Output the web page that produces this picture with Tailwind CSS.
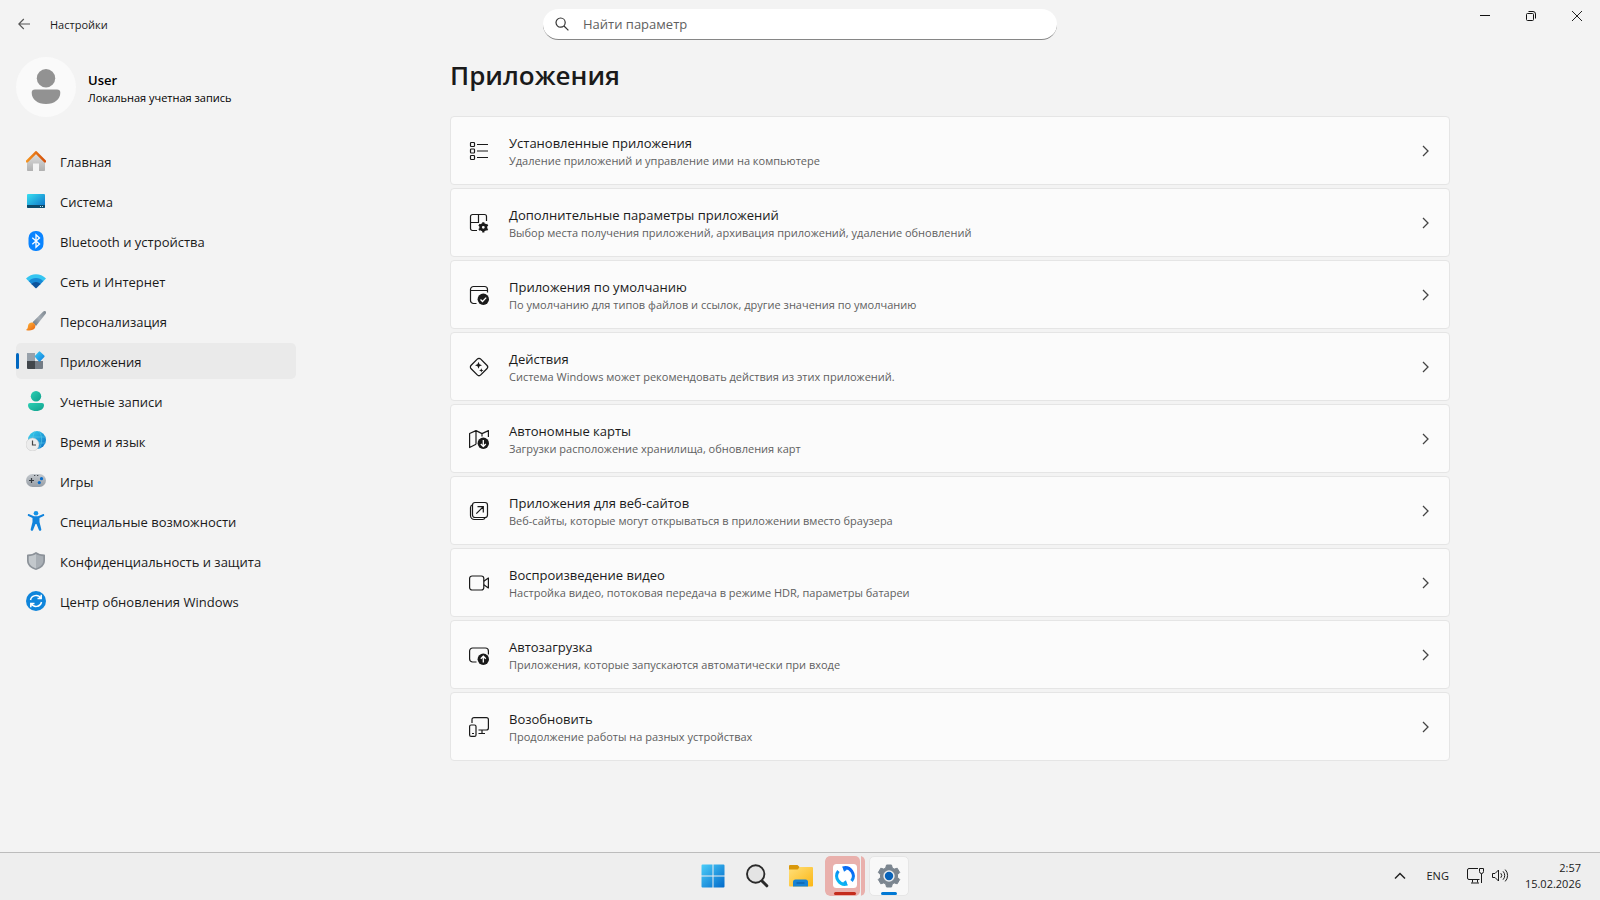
<!DOCTYPE html>
<html lang="ru">
<head>
  <meta charset="UTF-8">
  <meta name="viewport" content="width=device-width, initial-scale=1.0">
  <title>Настройки</title>
  <script src="https://cdn.jsdelivr.net/npm/@tailwindcss/browser@4"></script>
</head>
<body class="flex flex-col min-h-screen bg-[#f3f3f3] text-[#1a1a1a] font-['Open_Sans','Noto_Sans',sans-serif] text-[13px] leading-5">
  <!-- Title bar -->
  <header class="grid grid-cols-[1fr_minmax(0,514px)_1fr] h-12">
    <div class="flex items-center">
      <button class="w-12 h-8 pl-[18px]" aria-label="Назад">
        <svg class="w-3 h-3" viewBox="0 0 12 12" fill="none" stroke="#555" stroke-width="1.1"><path d="M12 6H.8M5.8 1 .8 6l5 5"/></svg>
      </button>
      <span class="pl-0.5 pt-0.5 text-[11px]">Настройки</span>
    </div>
    <div class="flex items-center gap-[14px] h-[31px] mt-[9px] pl-3 bg-white rounded-full border-b border-[#868686]">
      <svg class="w-[14px] h-[14px]" viewBox="0 0 14 14" fill="none" stroke="#333" stroke-width="1.2"><circle cx="5.6" cy="5.6" r="4.6"/><path d="m9 9 4.4 4.4"/></svg>
      <input type="text" aria-label="Найти параметр" placeholder="Найти параметр" class="flex-1 outline-none placeholder:text-[#606060]">
    </div>
    <div class="flex justify-end">
      <button class="flex items-center justify-center w-[46px] h-8" aria-label="Свернуть">
        <svg class="w-[10px] h-[10px]" viewBox="0 0 10 10" stroke="#111"><path d="M0 4.5h10"/></svg>
      </button>
      <button class="flex items-center justify-center w-[46px] h-8" aria-label="Свернуть в окно">
        <svg class="w-[10px] h-[10px]" viewBox="0 0 10 10" fill="none" stroke="#111"><rect x=".5" y="2.5" width="7" height="7" rx="1"/><path d="M2.5.5H7A2.5 2.5 0 0 1 9.5 3v4.5"/></svg>
      </button>
      <button class="flex items-center justify-center w-[46px] h-8" aria-label="Закрыть">
        <svg class="w-[10px] h-[10px]" viewBox="0 0 10 10" stroke="#222"><path d="m0 0 10 10M10 0 0 10"/></svg>
      </button>
    </div>
  </header>

  <div class="flex flex-1">
    <!-- Sidebar -->
    <aside class="w-[300px] shrink-0 pl-4 pr-1 pt-[9px]">
      <div class="flex items-center gap-3">
        <svg class="w-[60px] h-[60px]" viewBox="0 0 60 60"><circle cx="30" cy="30" r="30" fill="#fafafa"/><circle cx="30" cy="21.3" r="9.2" fill="#929292"/><path d="M19 32.5h22a3.3 3.3 0 0 1 3.3 3.3C44.3 42.5 38.5 47 30 47s-14.3-4.5-14.3-11.2A3.3 3.3 0 0 1 19 32.5z" fill="#929292"/></svg>
        <div class="pt-1 text-black">
          <div class="leading-[18px] font-semibold">User</div>
          <div class="text-[11px] leading-[18px]">Локальная учетная запись</div>
        </div>
      </div>
      <nav class="flex flex-col gap-1 mt-[26px]">
        <a href="#" class="flex items-center gap-[14px] h-9 pl-[10px] pt-0.5 rounded-[5px]">
          <svg class="w-5 h-5 mb-0.5" viewBox="0 0 20 20">
            <defs>
              <linearGradient id="wall" x1="0" y1="0" x2="0" y2="1"><stop stop-color="#e0e0e0"/><stop offset="1" stop-color="#b0b0b0"/></linearGradient>
              <linearGradient id="roof"><stop stop-color="#f5931f"/><stop offset="1" stop-color="#d4500c"/></linearGradient>
            </defs>
            <path d="M1 10 10 2l9 8v9.200a.8.8 0 0 1-.8.8H13v-7.500H7V20H1.800a.8.8 0 0 1-.8-.8z" fill="url(#wall)"/>
            <path d="m1 10.300 9-9 9 9" fill="none" stroke="url(#roof)" stroke-width="2.500" stroke-linecap="round" stroke-linejoin="round"/>
          </svg>
          Главная
        </a>
        <a href="#" class="flex items-center gap-[14px] h-9 pl-[10px] pt-0.5 rounded-[5px]">
          <svg class="w-5 h-5 mb-0.5" viewBox="0 0 20 20">
            <defs><linearGradient id="screen" x1="0" y1="0" x2="1" y2="1"><stop stop-color="#37dff0"/><stop offset="1" stop-color="#0b6dc7"/></linearGradient></defs>
            <rect x="1" y="3" width="18" height="14" rx="1" fill="url(#screen)"/>
            <path d="M1 14h18v2a1 1 0 0 1-1 1H2a1 1 0 0 1-1-1z" fill="#0c4a6b"/>
            <path d="M14 15h1v1h-1zM16 15h1v1h-1z" fill="#b8e6f5"/>
          </svg>
          Система
        </a>
        <a href="#" class="flex items-center gap-[14px] h-9 pl-[10px] pt-0.5 rounded-[5px]">
          <svg class="w-5 h-5 mb-0.5" viewBox="0 0 20 20"><rect x="2.500" width="15" height="20" rx="7" fill="#0a84ff"/><path d="m6.300 6.800 7.200 6.200-3.500 3.200V3.800L13.500 7l-7.200 6.200" fill="none" stroke="#fff" stroke-width="1.300"/></svg>
          Bluetooth и устройства
        </a>
        <a href="#" class="flex items-center gap-[14px] h-9 pl-[10px] pt-0.5 rounded-[5px]">
          <svg class="w-5 h-5 mb-0.5" viewBox="0 0 20 20"><path d="M0 7.500C5.500 1.800 14.500 1.800 20 7.500l-2.700 2.800H2.700z" fill="#35c5f1"/><path d="M2.700 10.300c4-4.300 10.600-4.300 14.600 0L14.200 13.500H5.800z" fill="#1789d6"/><path d="M5.400 13c2.500-2.700 6.700-2.700 9.200 0l-4 4a.9.9 0 0 1-1.200 0z" fill="#0c539c"/></svg>
          Сеть и Интернет
        </a>
        <a href="#" class="flex items-center gap-[14px] h-9 pl-[10px] pt-0.5 rounded-[5px]">
          <svg class="w-5 h-5 mb-0.5" viewBox="0 0 20 20">
            <defs>
              <linearGradient id="handle" x1="1" y1="0" x2="0" y2="1"><stop stop-color="#7d8790"/><stop offset=".5" stop-color="#a4acb4"/><stop offset="1" stop-color="#68727c"/></linearGradient>
              <linearGradient id="tip" x1="0" y1="0" x2="1" y2="1"><stop stop-color="#ffb83d"/><stop offset="1" stop-color="#e8620d"/></linearGradient>
            </defs>
            <path d="M6.500 11.300 17 .8c.9-.9 2.100-.9 2.700-.3.500.6.500 1.800-.2 2.600L10 15z" fill="url(#handle)"/>
            <path d="M.4 18.500c1.700-1 1.200-2.500 1.800-4.500.6-2 2.800-3 4.800-2.200 2 .8 2.800 3 2 5-1 2.500-5.500 3.300-8.600 2.400-.3-.2-.3-.5 0-.7z" fill="url(#tip)"/>
          </svg>
          Персонализация
        </a>
        <a href="#" aria-current="page" class="relative flex items-center gap-[14px] h-9 pl-[10px] pt-0.5 rounded-[5px] bg-[#eaeaea]">
          <span class="absolute left-0 top-[10px] w-[3px] h-4 rounded-full bg-[#0067c0]"></span>
          <svg class="w-5 h-5 mb-0.5" viewBox="0 0 20 20">
            <defs><linearGradient id="gem" x1="0" y1="0" x2="1" y2="1"><stop stop-color="#40cdf5"/><stop offset="1" stop-color="#0c7bdc"/></linearGradient></defs>
            <path d="M1 2h8v8H1z" fill="#98a1aa"/><path d="M1 10h8v8H2a1 1 0 0 1-1-1z" fill="#41464b"/><path d="M9 10h8v7a1 1 0 0 1-1 1H9z" fill="#747c85"/>
            <path d="m12.800.7-3.800 4a1 1 0 0 0 0 1.400l3.800 4.200a1 1 0 0 0 1.400 0L18.300 6a1 1 0 0 0 0-1.400L14.200.7a1 1 0 0 0-1.400 0z" fill="url(#gem)"/>
          </svg>
          Приложения
        </a>
        <a href="#" class="flex items-center gap-[14px] h-9 pl-[10px] pt-0.5 rounded-[5px]">
          <svg class="w-5 h-5 mb-0.5" viewBox="0 0 20 20">
            <defs><linearGradient id="person" x1="0" y1="0" x2="1" y2="1"><stop stop-color="#2bd0b4"/><stop offset="1" stop-color="#109f8c"/></linearGradient></defs>
            <circle cx="10" cy="5.200" r="5.200" fill="url(#person)"/><path d="M4 12h12a2 2 0 0 1 2 2c0 3.700-3.200 6-8 6s-8-2.300-8-6a2 2 0 0 1 2-2z" fill="url(#person)"/>
          </svg>
          Учетные записи
        </a>
        <a href="#" class="flex items-center gap-[14px] h-9 pl-[10px] pt-0.5 rounded-[5px]">
          <svg class="w-5 h-5 mb-0.5" viewBox="0 0 20 20">
            <defs><linearGradient id="globe" x1="0" y1="0" x2="1" y2="1"><stop stop-color="#36d3ee"/><stop offset="1" stop-color="#0e6fc4"/></linearGradient></defs>
            <circle cx="11" cy="9" r="9" fill="url(#globe)"/>
            <path d="M2.800 6h16.600M3 12h16.500M9 0c-3 5-3 12 1 18M13 0c3.500 5 3.500 12 0 18" fill="none" stroke="#5ccbea" stroke-width=".6"/>
            <circle cx="6.500" cy="13.500" r="6.500" fill="#ececec" stroke="#c4c4c4" stroke-width=".5"/><path d="M6.500 9.500V14H10" fill="none" stroke="#444" stroke-width="1.200"/>
          </svg>
          Время и язык
        </a>
        <a href="#" class="flex items-center gap-[14px] h-9 pl-[10px] pt-0.5 rounded-[5px]">
          <svg class="w-5 h-5 mb-0.5" viewBox="0 0 20 20">
            <defs><linearGradient id="pad" x1="0" y1="0" x2="0" y2="1"><stop stop-color="#c3c8cd"/><stop offset="1" stop-color="#969da5"/></linearGradient></defs>
            <rect y="3" width="20" height="13" rx="6.500" fill="url(#pad)"/><path d="M5.500 7v5M3 9.500h5" stroke="#343a40" stroke-width="1.200"/><path d="M8 4h1.300v1H8zM11 4h1.300v1H11z" fill="#454b51"/><circle cx="15.500" cy="7.700" r="1.600" fill="#0a6cc9"/><circle cx="13.300" cy="11.600" r="1.600" fill="#0a6cc9"/>
          </svg>
          Игры
        </a>
        <a href="#" class="flex items-center gap-[14px] h-9 pl-[10px] pt-0.5 rounded-[5px]">
          <svg class="w-5 h-5 mb-0.5" viewBox="0 0 20 20"><circle cx="10" cy="2.300" r="2.300" fill="#1492e6"/><path d="M3.300 3.200 8 5.200h4l4.700-2c1.500-.5 2.100 1.300.9 1.900L13.500 7v4l1.800 7.200c.3 1.600-1.800 2.200-2.400.7L10.500 13h-1l-2.400 5.900c-.6 1.500-2.700.9-2.400-.7L6.500 11V7L2.400 5.100c-1.200-.6-.6-2.400.9-1.900z" fill="#1083dc"/></svg>
          Специальные возможности
        </a>
        <a href="#" class="flex items-center gap-[14px] h-9 pl-[10px] pt-0.5 rounded-[5px]">
          <svg class="w-5 h-5 mb-0.5" viewBox="0 0 20 20"><path d="M10 1c2.500 1.700 5 2.500 8.300 2.500.4 0 .7.300.7.700v5.300c0 4.500-3.500 8-9 9.500-5.500-1.500-9-5-9-9.500V4.200c0-.4.3-.7.7-.7C5 3.500 7.500 2.700 10 1z" fill="#8c9299"/><path d="M10 3c2.300 1.400 4.700 2 7.300 2.200v4.300c0 3.600-2.800 6.500-7.300 7.900z" fill="#a9afb5"/><path d="M10 3v14.400c-4.500-1.400-7.300-4.300-7.300-7.900V5.200C5.300 5 7.700 4.400 10 3z" fill="#c3c8cc"/></svg>
          Конфиденциальность и защита
        </a>
        <a href="#" class="flex items-center gap-[14px] h-9 pl-[10px] pt-0.5 rounded-[5px]">
          <svg class="w-5 h-5 mb-0.5" viewBox="0 0 20 20"><circle cx="10" cy="10" r="10" fill="#0f85db"/><path d="M4.500 9A5.600 5.600 0 0 1 14.800 7.300M15.500 11A5.600 5.600 0 0 1 5.200 12.700M15.200 3.800v3.700h-3.700M4.800 16.200v-3.700h3.700" fill="none" stroke="#fff" stroke-width="1.500"/></svg>
          Центр обновления Windows
        </a>
      </nav>
    </aside>

    <!-- Page content -->
    <main class="flex-1 min-w-0 pt-[9px] pb-8">
      <div class="max-w-[1000px] mx-auto">
        <h1 class="text-[26px] leading-9 font-semibold">Приложения</h1>
        <div class="flex flex-col gap-[3px] mt-[23px]">
          <a href="#" class="flex items-center min-h-[69px] pl-[18px] pr-[18px] bg-[#fbfbfb] border border-[#e5e5e5] rounded">
            <svg class="w-5 h-5" viewBox="0 0 20 20" fill="none" stroke="#1a1a1a" stroke-width="1.200"><rect x="1.500" y="1.500" width="4" height="4" rx=".8"/><rect x="1.500" y="8" width="4" height="4" rx=".8"/><rect x="1.500" y="14.500" width="4" height="4" rx=".8"/><path d="M8 3.500h11M8 10h11M8 16.500h11"/></svg>
            <div class="flex-1 ml-5">
              <div class="leading-5">Установленные приложения</div>
              <div class="text-[11px] leading-4 text-[#606060]">Удаление приложений и управление ими на компьютере</div>
            </div>
            <svg class="w-[10px] h-3" viewBox="0 0 10 12" fill="none" stroke="#444" stroke-width="1.300"><path d="m2 1 5 5-5 5"/></svg>
          </a>
          <a href="#" class="flex items-center min-h-[69px] pl-[18px] pr-[18px] bg-[#fbfbfb] border border-[#e5e5e5] rounded">
            <svg class="w-5 h-5" viewBox="0 0 20 20" fill="none" stroke="#1a1a1a" stroke-width="1.200"><path d="M8 17.500H3.500a2 2 0 0 1-2-2v-12a2 2 0 0 1 2-2h12a2 2 0 0 1 2 2V8M9.500 1.500v8h-8"/><circle cx="14.300" cy="14.300" r="2.700" stroke-width="2.600"/><path d="M14.300 9.200v2M14.300 17.400v2M9.900 11.700l1.700 1M17 15.900l1.700 1M9.900 16.900l1.700-1M17 12.700l1.700-1" stroke-width="2.200"/></svg>
            <div class="flex-1 ml-5">
              <div class="leading-5">Дополнительные параметры приложений</div>
              <div class="text-[11px] leading-4 text-[#606060]">Выбор места получения приложений, архивация приложений, удаление обновлений</div>
            </div>
            <svg class="w-[10px] h-3" viewBox="0 0 10 12" fill="none" stroke="#444" stroke-width="1.300"><path d="m2 1 5 5-5 5"/></svg>
          </a>
          <a href="#" class="flex items-center min-h-[69px] pl-[18px] pr-[18px] bg-[#fbfbfb] border border-[#e5e5e5] rounded">
            <svg class="w-5 h-5" viewBox="0 0 20 20" fill="none" stroke="#1a1a1a" stroke-width="1.200"><path d="M7.500 18.500h-3a3 3 0 0 1-3-3v-11a3 3 0 0 1 3-3h11a3 3 0 0 1 3 3v3M1.500 5.500h17"/><circle cx="14.300" cy="14.300" r="5.700" fill="#1a1a1a" stroke="none"/><path d="m11.500 14.500 2 2 3.700-3.900" stroke="#fff" stroke-width="1.300"/></svg>
            <div class="flex-1 ml-5">
              <div class="leading-5">Приложения по умолчанию</div>
              <div class="text-[11px] leading-4 text-[#606060]">По умолчанию для типов файлов и ссылок, другие значения по умолчанию</div>
            </div>
            <svg class="w-[10px] h-3" viewBox="0 0 10 12" fill="none" stroke="#444" stroke-width="1.300"><path d="m2 1 5 5-5 5"/></svg>
          </a>
          <a href="#" class="flex items-center min-h-[69px] pl-[18px] pr-[18px] bg-[#fbfbfb] border border-[#e5e5e5] rounded">
            <svg class="w-5 h-5" viewBox="0 0 20 20" fill="none" stroke="#1a1a1a" stroke-width="1.300"><rect x="3.200" y="3.200" width="13.600" height="13.600" rx="2.500" transform="rotate(45 10 10)"/><path d="m9.500 4.700 1 2.500 2.500 1-2.500 1-1 2.500-1-2.500-2.500-1 2.500-1zM12.300 11.200l.6 1.600 1.600.6-1.600.6-.6 1.600-.6-1.600-1.600-.6 1.600-.6z" fill="#1a1a1a" stroke="none"/></svg>
            <div class="flex-1 ml-5">
              <div class="leading-5">Действия</div>
              <div class="text-[11px] leading-4 text-[#606060]">Система Windows может рекомендовать действия из этих приложений.</div>
            </div>
            <svg class="w-[10px] h-3" viewBox="0 0 10 12" fill="none" stroke="#444" stroke-width="1.300"><path d="m2 1 5 5-5 5"/></svg>
          </a>
          <a href="#" class="flex items-center min-h-[69px] pl-[18px] pr-[18px] bg-[#fbfbfb] border border-[#e5e5e5] rounded">
            <svg class="w-5 h-5" viewBox="0 0 20 20" fill="none" stroke="#1a1a1a" stroke-width="1.200" stroke-linejoin="round"><path d="M7 15.300.6 18.500V4.500L7 1.600l6 3 6.400-3V8M7 1.600v13.700M13 4.600v3"/><circle cx="14.300" cy="14.300" r="5.700" fill="#1a1a1a" stroke="none"/><path d="M14.300 11v6.300M11.800 15l2.500 2.500 2.500-2.500" stroke="#fff" stroke-width="1.300"/></svg>
            <div class="flex-1 ml-5">
              <div class="leading-5">Автономные карты</div>
              <div class="text-[11px] leading-4 text-[#606060]">Загрузки расположение хранилища, обновления карт</div>
            </div>
            <svg class="w-[10px] h-3" viewBox="0 0 10 12" fill="none" stroke="#444" stroke-width="1.300"><path d="m2 1 5 5-5 5"/></svg>
          </a>
          <a href="#" class="flex items-center min-h-[69px] pl-[18px] pr-[18px] bg-[#fbfbfb] border border-[#e5e5e5] rounded">
            <svg class="w-5 h-5" viewBox="0 0 20 20" fill="none" stroke="#1a1a1a" stroke-width="1.200"><rect x="3.500" y="1.500" width="15" height="15" rx="2.500"/><path d="M3.500 3.800A3 3 0 0 0 1.500 6.500v8a4 4 0 0 0 4 4h8a3 3 0 0 0 2.700-2M7.300 12.700l6.700-6.700M8.500 5.700h5.800v5.800"/></svg>
            <div class="flex-1 ml-5">
              <div class="leading-5">Приложения для веб-сайтов</div>
              <div class="text-[11px] leading-4 text-[#606060]">Веб-сайты, которые могут открываться в приложении вместо браузера</div>
            </div>
            <svg class="w-[10px] h-3" viewBox="0 0 10 12" fill="none" stroke="#444" stroke-width="1.300"><path d="m2 1 5 5-5 5"/></svg>
          </a>
          <a href="#" class="flex items-center min-h-[69px] pl-[18px] pr-[18px] bg-[#fbfbfb] border border-[#e5e5e5] rounded">
            <svg class="w-5 h-5" viewBox="0 0 20 20" fill="none" stroke="#1a1a1a" stroke-width="1.200" stroke-linejoin="round"><rect x=".6" y="3" width="14.200" height="14" rx="2.500"/><path d="m14.800 8.300 4.600-3.300v10l-4.600-3.300"/></svg>
            <div class="flex-1 ml-5">
              <div class="leading-5">Воспроизведение видео</div>
              <div class="text-[11px] leading-4 text-[#606060]">Настройка видео, потоковая передача в режиме HDR, параметры батареи</div>
            </div>
            <svg class="w-[10px] h-3" viewBox="0 0 10 12" fill="none" stroke="#444" stroke-width="1.300"><path d="m2 1 5 5-5 5"/></svg>
          </a>
          <a href="#" class="flex items-center min-h-[69px] pl-[18px] pr-[18px] bg-[#fbfbfb] border border-[#e5e5e5] rounded">
            <svg class="w-5 h-5" viewBox="0 0 20 20" fill="none" stroke="#1a1a1a" stroke-width="1.200"><path d="M7.500 17H3.600a3 3 0 0 1-3-3V6a3 3 0 0 1 3-3h12.800a3 3 0 0 1 3 3v3.500"/><circle cx="14.300" cy="14.300" r="5.700" fill="#1a1a1a" stroke="none"/><path d="M14.300 17.600v-6.300M11.800 13.700l2.500-2.500 2.500 2.500" stroke="#fff" stroke-width="1.300"/></svg>
            <div class="flex-1 ml-5">
              <div class="leading-5">Автозагрузка</div>
              <div class="text-[11px] leading-4 text-[#606060]">Приложения, которые запускаются автоматически при входе</div>
            </div>
            <svg class="w-[10px] h-3" viewBox="0 0 10 12" fill="none" stroke="#444" stroke-width="1.300"><path d="m2 1 5 5-5 5"/></svg>
          </a>
          <a href="#" class="flex items-center min-h-[69px] pl-[18px] pr-[18px] bg-[#fbfbfb] border border-[#e5e5e5] rounded">
            <svg class="w-5 h-5" viewBox="0 0 20 20" fill="none" stroke="#1a1a1a" stroke-width="1.200"><path d="M3 6V2.600a2 2 0 0 1 2-2h12.400a2 2 0 0 1 2 2V11a2 2 0 0 1-2 2H9.500M13 13v3.500M9.500 16.500h6.500"/><rect x=".6" y="8" width="6.400" height="11.400" rx="1.500"/><path d="M3 16.500h2"/></svg>
            <div class="flex-1 ml-5">
              <div class="leading-5">Возобновить</div>
              <div class="text-[11px] leading-4 text-[#606060]">Продолжение работы на разных устройствах</div>
            </div>
            <svg class="w-[10px] h-3" viewBox="0 0 10 12" fill="none" stroke="#444" stroke-width="1.300"><path d="m2 1 5 5-5 5"/></svg>
          </a>
        </div>
      </div>
    </main>
  </div>

  <!-- Taskbar -->
  <footer class="grid grid-cols-[1fr_auto_1fr] items-center h-12 pl-0.5 pb-0.5 bg-[#eeeeee] border-t border-[#bcbcbc]">
    <div></div>
    <div class="flex gap-1">
      <button class="flex items-center justify-center w-10 h-10" aria-label="Пуск">
        <svg class="w-6 h-6" viewBox="0 0 24 24">
          <defs><linearGradient id="win" gradientUnits="userSpaceOnUse" x1="0" y1="0" x2="24" y2="24"><stop stop-color="#4dd0fa"/><stop offset="1" stop-color="#0067c9"/></linearGradient></defs>
          <path d="M1.500.5H11.500v11H.5v-10a1 1 0 0 1 1-1zM12.500.5h10a1 1 0 0 1 1 1v10h-11zM.5 12.500h11v11h-10a1 1 0 0 1-1-1zM12.500 12.500h11v10a1 1 0 0 1-1 1h-10z" fill="url(#win)"/>
        </svg>
      </button>
      <button class="flex items-center justify-center w-10 h-10" aria-label="Поиск">
        <svg class="w-6 h-6" viewBox="0 0 24 24"><path d="m16.500 16.500 5.300 5.300" stroke="#2a2a2a" stroke-width="3" stroke-linecap="round"/><circle cx="10.700" cy="10" r="8.700" fill="#e4e4e4" stroke="#2a2a2a" stroke-width="1.900"/></svg>
      </button>
      <button class="flex items-center justify-center w-10 h-10" aria-label="Проводник">
        <svg class="w-6 h-6" viewBox="0 0 24 24">
          <defs><linearGradient id="folder" x1="0" y1="0" x2="1" y2="1"><stop stop-color="#ffe07a"/><stop offset="1" stop-color="#fbb614"/></linearGradient></defs>
          <path d="M0 2a1 1 0 0 1 1-1h7.500L10.500 3v4H0z" fill="#d9980b"/><path d="M0 5.500h8.500L11 3h12a1 1 0 0 1 1 1v17.500a1 1 0 0 1-1 1H1a1 1 0 0 1-1-1z" fill="url(#folder)"/><path d="M4 22.500V18a2.500 2.500 0 0 1 2.500-2.500h10A2.500 2.500 0 0 1 19 18v4.500z" fill="#1682d4"/><path d="M7.500 19h8" stroke="#0d5da5" stroke-width="1.200"/>
        </svg>
      </button>
      <button class="relative flex w-10 h-10 rounded-[5px] overflow-hidden" aria-label="RustDesk">
        <span class="w-[35px] h-10 rounded-[5px] bg-[#e9b0ac]"></span>
        <span class="flex-1 h-10 ml-px bg-[#e9b0ac] rounded-r-[5px]"></span>
        <svg class="absolute left-2 top-2 w-6 h-6" viewBox="0 0 24 24">
          <defs><linearGradient id="ring" gradientUnits="userSpaceOnUse" x1="18" y1="3" x2="6" y2="21"><stop stop-color="#0a5cf5"/><stop offset="1" stop-color="#0ac0f2"/></linearGradient></defs>
          <rect width="24" height="24" rx="3.500" fill="#fff"/>
          <path d="M9.800 4A8.300 8.300 0 0 1 18.600 17M14.200 20A8.300 8.300 0 0 1 5.400 7" fill="none" stroke="url(#ring)" stroke-width="3"/>
          <path d="m9.400 2.500 1.600 5.200 3-2zM14.600 21.500 13 16.300l-3 2z" fill="url(#ring)"/>
        </svg>
        <span class="absolute left-[9px] bottom-px w-[22px] h-[3px] rounded-full bg-[#c42b1c]"></span>
      </button>
      <button class="relative flex items-center justify-center w-10 h-10 bg-[#f8f8f8] border border-[#e6e6e6] rounded-[5px]" aria-label="Параметры">
        <svg class="w-6 h-6" viewBox="0 0 24 24">
          <path d="M9.500 1h5l.8 3 1.900 1.100 3-.9 2.500 4.300-2.200 2.200v2.600l2.200 2.200-2.500 4.300-3-.9-1.900 1.100-.8 3h-5l-.8-3-1.900-1.100-3 .9-2.500-4.300 2.200-2.200v-2.600L1.300 8.500l2.500-4.300 3 .9L8.700 4z" fill="#7b858f" stroke="#7b858f" stroke-linejoin="round"/>
          <circle cx="12" cy="12" r="5.700" fill="#e9ecef"/><circle cx="12" cy="12" r="4.200" fill="#0862b8"/>
        </svg>
        <span class="absolute left-[11px] bottom-0 w-4 h-[3px] rounded-full bg-[#0078d4]"></span>
      </button>
    </div>
    <div class="flex items-center justify-end pr-[19px] text-[11px]">
      <button class="mr-5" aria-label="Показать скрытые значки">
        <svg class="w-3 h-3" viewBox="0 0 12 12" fill="none" stroke="#222" stroke-width="1.500"><path d="m1 8.500 5-5 5 5"/></svg>
      </button>
      <button class="mr-[18px]">ENG</button>
      <button class="mr-2" aria-label="Сеть">
        <svg class="w-[17px] h-[17px]" viewBox="0 0 17 17" fill="none" stroke="#1a1a1a"><path d="M11 1.500H2A1.500 1.500 0 0 0 .5 3v8A1.500 1.500 0 0 0 2 12.500h10.500M5.500 12.500v3M10.500 12.500v3M4 16h8M14.500 6.500V16"/><path d="M12.500 1.500h4v3a2 2 0 0 1-4 0z"/></svg>
      </button>
      <button class="mr-4" aria-label="Громкость">
        <svg class="w-[17px] h-[17px]" viewBox="0 0 17 17" fill="none" stroke="#1a1a1a" stroke-linejoin="round"><path d="M.5 6.500H3L6.500 3v11L3 10.500H.5zM8.800 6.200a3.500 3.500 0 0 1 0 4.600M11 4.300a6 6 0 0 1 0 8.400M13.200 2.600a8.500 8.500 0 0 1 0 11.800"/></svg>
      </button>
      <button class="text-right leading-4">2:57<br>15.02.2026</button>
    </div>
  </footer>
</body>
</html>
